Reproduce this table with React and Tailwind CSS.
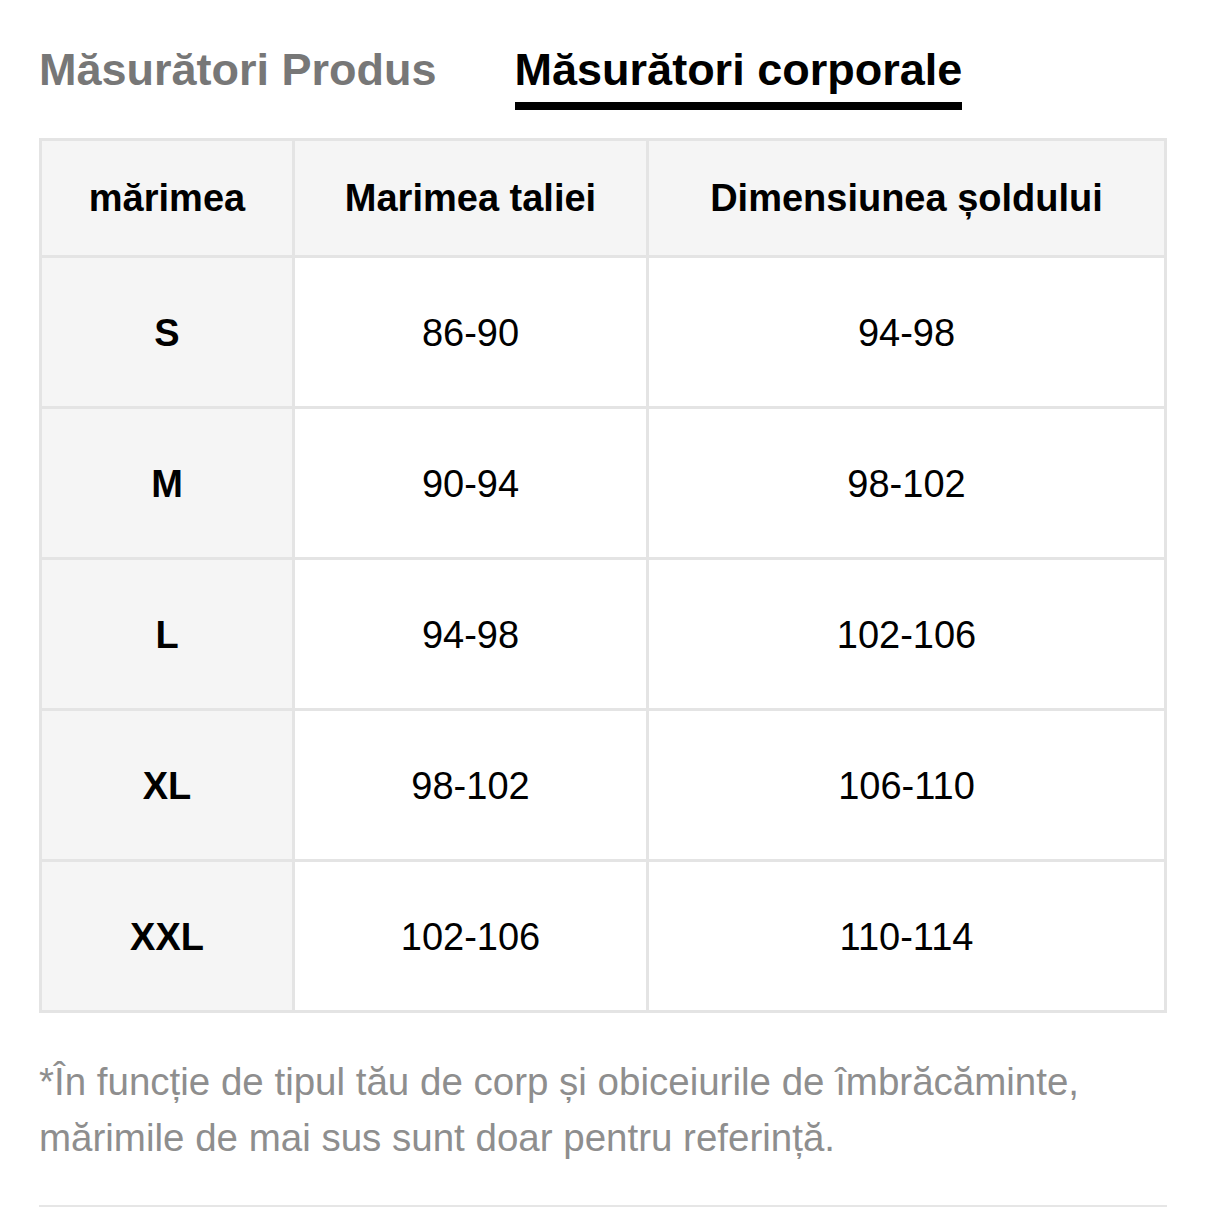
const rows = [
  { size: "S", waist: "86-90", hip: "94-98" },
  { size: "M", waist: "90-94", hip: "98-102" },
  { size: "L", waist: "94-98", hip: "102-106" },
  { size: "XL", waist: "98-102", hip: "106-110" },
  { size: "XXL", waist: "102-106", hip: "110-114" },
];

const App = () => {
  return (
    <div
      className="min-h-screen bg-white px-[39px] pt-[47px] pb-[20px] text-black"
      style={{ fontFamily: '"Liberation Sans", Arial, sans-serif' }}
    >
      {/* Tabs */}
      <div className="flex items-start gap-[78px]">
        <div className="pb-[10px] border-b-[8px] border-transparent text-[45px] leading-none font-bold text-[#777777]">
          Măsurători Produs
        </div>
        <div className="pb-[10px] border-b-[8px] border-black text-[45px] leading-none font-bold text-black">
          Măsurători corporale
        </div>
      </div>

      {/* Size table */}
      <div className="mt-[28px] grid grid-cols-[250px_351px_1fr] gap-[3px] p-[3px] bg-[#e4e4e4]">
        <div className="h-[114px] bg-[#f5f5f5] flex items-center justify-center text-[38px] font-bold">
          mărimea
        </div>
        <div className="h-[114px] bg-[#f5f5f5] flex items-center justify-center text-[38px] font-bold">
          Marimea taliei
        </div>
        <div className="h-[114px] bg-[#f5f5f5] flex items-center justify-center text-[38px] font-bold">
          Dimensiunea șoldului
        </div>
        {rows.map((r) => (
          <>
            <div
              key={r.size + "-s"}
              className="h-[148px] pt-[3px] bg-[#f5f5f5] flex items-center justify-center text-[38px] font-bold"
            >
              {r.size}
            </div>
            <div
              key={r.size + "-w"}
              className="h-[148px] pt-[3px] bg-white flex items-center justify-center text-[38px]"
            >
              {r.waist}
            </div>
            <div
              key={r.size + "-h"}
              className="h-[148px] pt-[3px] bg-white flex items-center justify-center text-[38px]"
            >
              {r.hip}
            </div>
          </>
        ))}
      </div>

      {/* Footnote */}
      <p className="mt-[41px] text-[38.5px] leading-[56px] text-[#8e8e8e]">
        *În funcție de tipul tău de corp și obiceiurile de îmbrăcăminte,
        <br />
        mărimile de mai sus sunt doar pentru referință.
      </p>

      <div className="mt-[39px] h-[2px] bg-[#e6e6e6]" />
    </div>
  );
};

export default App;
